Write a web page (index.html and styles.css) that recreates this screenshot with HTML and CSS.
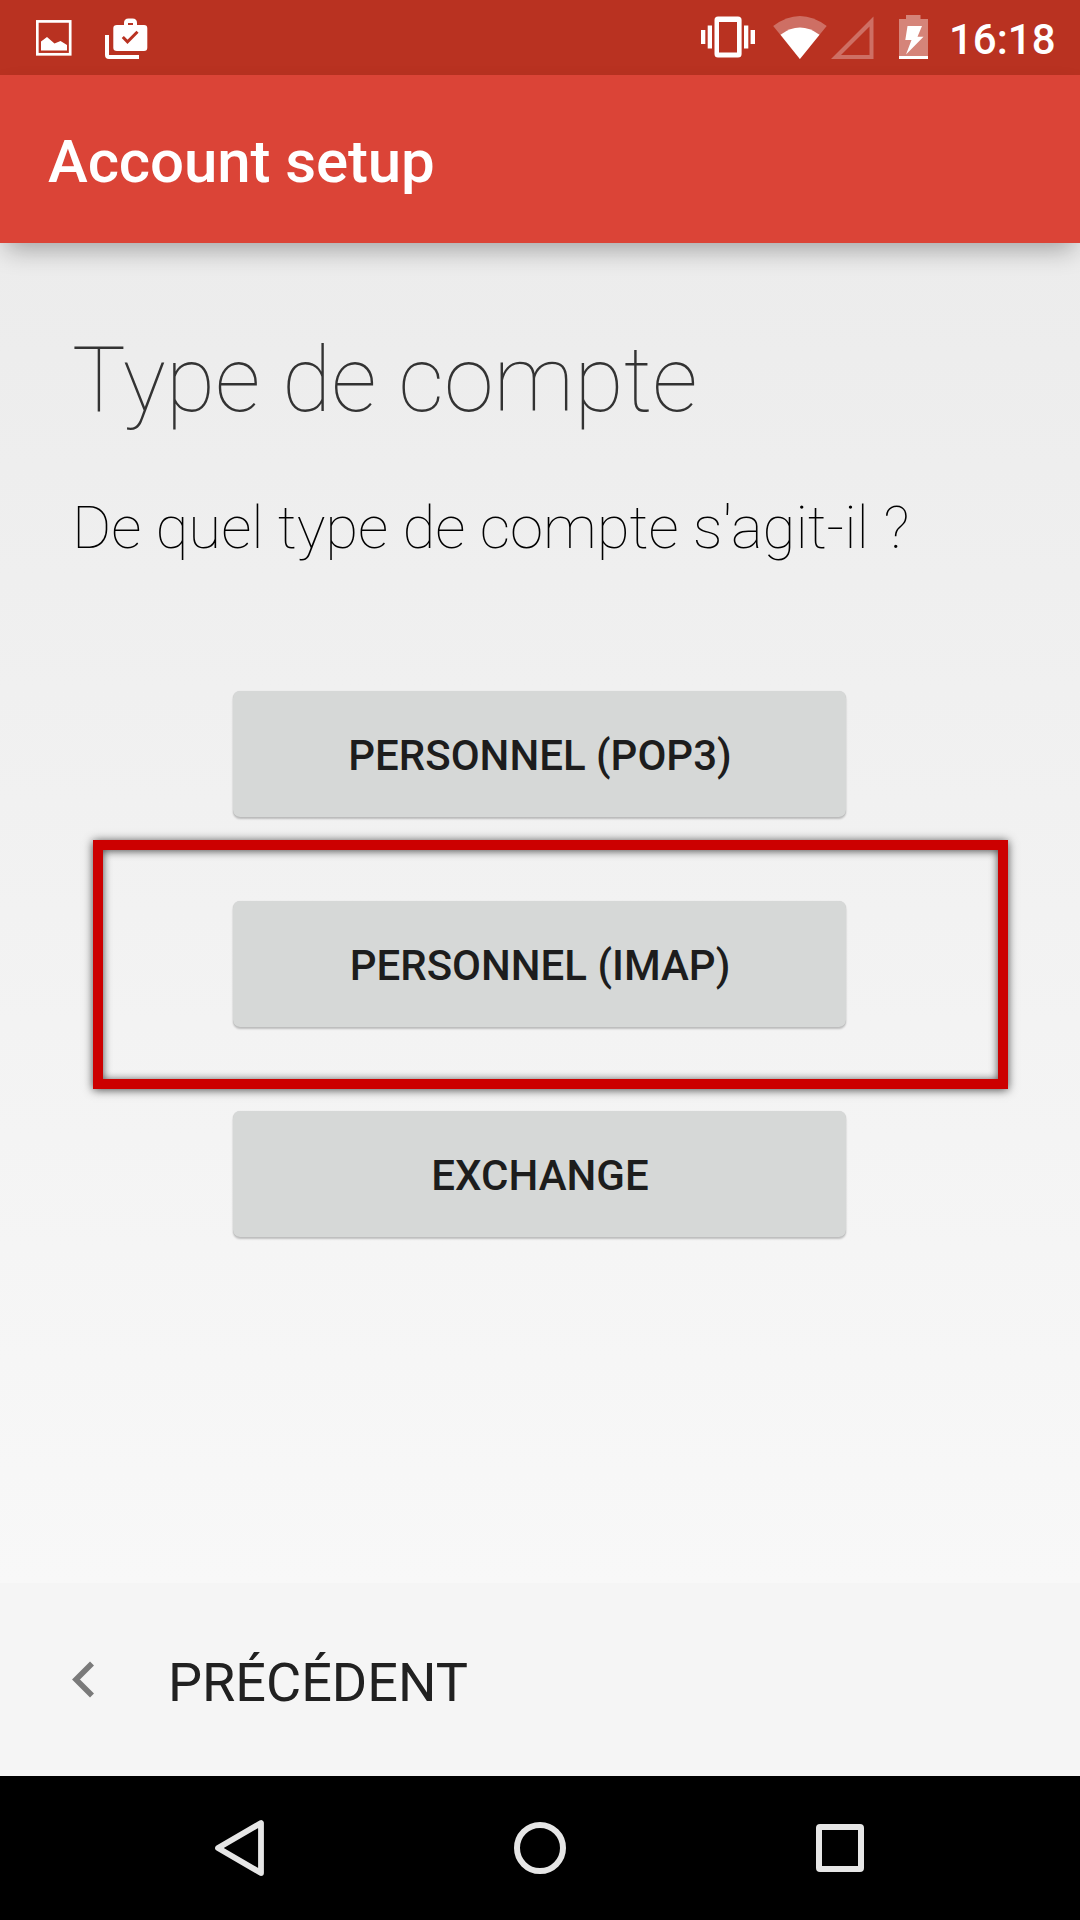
FILE: index.html
```html
<!DOCTYPE html>
<html lang="fr">
<head>
<meta charset="utf-8">
<title>Account setup</title>
<link rel="stylesheet" href="styles.css">
</head>
<body>
<div class="screen">
  <header class="status-bar">
    <div class="status-group notifications">
      <svg width="36" height="75" viewBox="36 0 36 75">
        <rect x="37.3" y="21.4" width="32.900" height="32.900" fill="none" stroke="#fff" stroke-width="2.7"/>
        <path d="M41 50.5V41.5L47 37L54.5 43.5L60.5 41L67 45V50.5Z" fill="#fff"/>
      </svg>
      <svg width="43" height="75" viewBox="105 0 43 75">
        <path d="M107 35V55Q107 57 109 57H139" fill="none" stroke="#fff" stroke-width="4"/>
        <path fill="#fff" fill-rule="evenodd" d="M117 25H124V23Q124 18.500 128.500 18.500H132.500Q137 18.500 137 23V25H144Q147.300 25 147.300 28.300V47.700Q147.300 51 144 51H117Q113.300 51 113.300 47.700V28.300Q113.300 25 117 25ZM128 25H133V23H128Z"/>
        <path d="M122.800 37L127.500 41.800L137.500 31.800" fill="none" stroke="#b93221" stroke-width="3"/>
      </svg>
    </div>
    <div class="status-group system">
      <svg width="54" height="75" viewBox="701 0 54 75">
        <path fill="#fff" fill-rule="evenodd" d="M718 16.500H738Q741.600 16.500 741.600 20V54Q741.600 57.500 738 57.500H718Q714.500 57.500 714.500 54V20Q714.500 16.500 718 16.500ZM719 22V52.500H737V22Z"/>
        <path fill="#fff" d="M701 30h4.300v14h-4.300zM707.700 25.500h4.300v23h-4.300zM744 25.500h4.300v23H744zM750.600 30h4.400v14h-4.400z"/>
      </svg>
      <svg class="wifi" width="54" height="75" viewBox="772.500 0 54 75">
        <path fill="#fff" fill-opacity=".3" d="M772.700 26Q799.400 6 826.200 26L799.400 59Z"/>
        <path fill="#fff" d="M780 34.700Q799.400 20.500 819 34.700L799.400 59Z"/>
      </svg>
      <svg class="signal" width="43" height="75" viewBox="831.500 0 43 75">
        <path fill="#fff" fill-opacity=".3" fill-rule="evenodd" d="M831.500 59L874 16.500V59ZM841.500 55H870V26.500Z"/>
      </svg>
      <svg class="battery" width="29" height="75" viewBox="899 0 29 75">
        <path fill="#fff" fill-opacity=".4" d="M906 19V15H920.500V19H928V56H899V19Z"/>
        <path fill="#fff" d="M899 56h29v3h-29zM907.500 26H922L917.500 36.800H923.500L906 54.500L911.500 40H905.300Z"/>
      </svg>
      <span class="clock">16:18</span>
    </div>
  </header>

  <div class="toolbar"><h1 class="toolbar-title">Account setup</h1></div>

  <main class="content">
    <h2 class="heading">Type de compte</h2>
    <p class="question">De quel type de compte s'agit-il ?</p>
    <div class="choices">
      <button class="choice">PERSONNEL (POP3)</button>
      <div class="highlighted">
        <button class="choice">PERSONNEL (IMAP)</button>
        <div class="highlight"></div>
      </div>
      <button class="choice">EXCHANGE</button>
    </div>
  </main>

  <footer class="footer">
    <svg class="chevron" width="24" height="38" viewBox="0 0 24 38">
      <path d="M21 2.500L5 18.500L21 34.500" fill="none" stroke="#7a7a7a" stroke-width="5.600"/>
    </svg>
    <span class="previous">PRÉCÉDENT</span>
  </footer>

  <nav class="nav-bar">
    <svg width="52" height="60" viewBox="214 1818 52 60">
      <path d="M261 1823V1873L218 1848Z" fill="none" stroke="#e6e6e6" stroke-width="5.800" stroke-linejoin="round"/>
    </svg>
    <svg width="52" height="60" viewBox="514 1818 52 60">
      <circle cx="540" cy="1848" r="23" fill="none" stroke="#e6e6e6" stroke-width="6"/>
    </svg>
    <svg width="52" height="60" viewBox="814 1818 52 60">
      <rect x="819" y="1827" width="42" height="42" rx="1" fill="none" stroke="#e6e6e6" stroke-width="6" stroke-linejoin="round"/>
    </svg>
  </nav>
</div>
</body>
</html>
```
FILE: styles.css
```css
* {
  box-sizing: border-box;
  margin: 0;
  padding: 0;
}

body {
  font-family: Roboto, "Liberation Sans", sans-serif;
}

svg {
  display: block;
  flex: none;
}

.screen {
  display: flex;
  flex-direction: column;
  width: 1080px;
  height: 1920px;
  overflow: hidden;
}

.status-bar {
  display: flex;
  justify-content: space-between;
  height: 75px;
  padding: 0 24px 0 36px;
  background: #b93221;
}

.status-group {
  display: flex;
}

.notifications {
  gap: 33px;
}

.wifi {
  margin-left: 18px;
}

.signal {
  margin-left: 4px;
}

.battery {
  margin-left: 25px;
}

.clock {
  width: 107px;
  margin-left: 21px;
  padding-top: 4px;
  color: #fff;
  font-size: 42px;
  font-weight: 500;
  line-height: 71px;
  white-space: nowrap;
}

.toolbar {
  display: flex;
  z-index: 1;
  height: 168px;
  padding: 5px 48px 0;
  background: #db4437;
  box-shadow: 0 12px 24px -6px rgba(0, 0, 0, 0.32);
}

.toolbar-title {
  color: #fff;
  font-size: 60px;
  font-weight: 500;
  letter-spacing: -0.12px;
  line-height: 163px;
}

.content {
  height: 1340px;
  padding: 85px 72px 0;
  background: linear-gradient(#ececec, #f8f8f8);
}

.heading {
  color: #333;
  font-size: 90px;
  font-weight: 100;
  letter-spacing: 0.05px;
  line-height: 106px;
}

.question {
  margin-top: 59px;
  color: #000;
  font-size: 60px;
  font-weight: 100;
  letter-spacing: -0.08px;
  line-height: 70px;
}

.choices {
  display: flex;
  flex-direction: column;
  align-items: center;
  gap: 84px;
  margin-top: 128px;
  padding-right: 1px;
}

.choice {
  display: block;
  width: 613px;
  height: 126px;
  padding: 3px 0 0 1px;
  border: 0;
  border-radius: 7px;
  background: #d6d8d7;
  box-shadow: 0 2px 2px rgba(0, 0, 0, 0.22), 0 0 1px rgba(0, 0, 0, 0.15);
  color: #1d1d1d;
  font: 500 42px/123px Roboto, "Liberation Sans", sans-serif;
}

.highlighted {
  position: relative;
}

.highlight {
  position: absolute;
  top: -61px;
  left: -140px;
  width: 915px;
  height: 249px;
  border: 10px solid #c00;
  box-shadow: 0 1px 9px rgba(0, 0, 0, 0.7), inset 0 1px 9px rgba(0, 0, 0, 0.7);
}

.footer {
  display: flex;
  align-items: center;
  gap: 73px;
  height: 193px;
  padding-left: 71px;
  background: #f5f5f5;
}

.previous {
  padding-top: 6px;
  color: #212121;
  font-size: 54px;
  line-height: 64px;
}

.nav-bar {
  display: flex;
  align-items: center;
  justify-content: center;
  gap: 248px;
  height: 144px;
  background: #000;
}
```
